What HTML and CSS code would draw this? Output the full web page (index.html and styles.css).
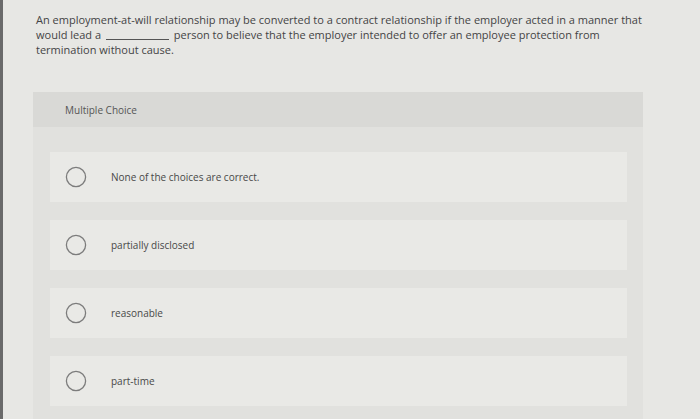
FILE: index.html
```html
<!DOCTYPE html>
<html>
<head>
<meta charset="utf-8">
<link rel="stylesheet" href="styles.css">
</head>
<body>
<div class="page">
  <p class="question">An employment-at-will relationship may be converted to a contract relationship if the employer acted in a manner that would lead a <span class="blank"></span> person to believe that the employer intended to offer an employee protection from termination without cause.</p>
  <div class="panel">
    <div class="panel-header">Multiple Choice</div>
    <div class="options">
      <div class="option"><svg class="radio" width="22" height="22" viewBox="0 0 22 22"><circle cx="11" cy="11" r="9.6" fill="none" stroke="#7c7c7c" stroke-width="1.3"/></svg><span class="label">None of the choices are correct.</span></div>
      <div class="option"><svg class="radio" width="22" height="22" viewBox="0 0 22 22"><circle cx="11" cy="11" r="9.6" fill="none" stroke="#7c7c7c" stroke-width="1.3"/></svg><span class="label">partially disclosed</span></div>
      <div class="option"><svg class="radio" width="22" height="22" viewBox="0 0 22 22"><circle cx="11" cy="11" r="9.6" fill="none" stroke="#7c7c7c" stroke-width="1.3"/></svg><span class="label">reasonable</span></div>
      <div class="option"><svg class="radio" width="22" height="22" viewBox="0 0 22 22"><circle cx="11" cy="11" r="9.6" fill="none" stroke="#7c7c7c" stroke-width="1.3"/></svg><span class="label">part-time</span></div>
    </div>
  </div>
</div>
</body>
</html>
```
FILE: styles.css
```css
html, body {
  margin: 0;
  padding: 0;
}
body {
  background: #e7e7e4;
  font-family: "Open Sans", "Lato", sans-serif;
  width: 700px;
  height: 419px;
  overflow: hidden;
}
.page {
  border-left: 3px solid #6a6a6a;
  height: 419px;
  box-sizing: border-box;
  display: flex;
  flex-direction: column;
}
.question {
  margin: 0;
  padding: 12px 56px 0 33px;
  font-size: 11px;
  line-height: 15px;
  color: #444;
}
.blank {
  display: inline-block;
  width: 63px;
  border-bottom: 1px solid #555;
  vertical-align: -1px;
  margin: 0 2px;
}
.panel {
  margin: 35px 0 0 30px;
  width: 610px;
  flex: 1;
  background: #e1e1de;
}
.panel-header {
  height: 35px;
  display: flex;
  align-items: center;
  padding-left: 32px;
  background: #d9d9d6;
  font-size: 10px;
  color: #555;
}
.options {
  padding: 25px 16px 0 17px;
  display: flex;
  flex-direction: column;
  gap: 18px;
}
.option {
  height: 50px;
  background: #e9e9e6;
  display: flex;
  align-items: center;
  padding-left: 15px;
  gap: 24px;
}
.radio {
  flex: none;
}
.label {
  font-size: 10px;
  color: #484848;
}
```
